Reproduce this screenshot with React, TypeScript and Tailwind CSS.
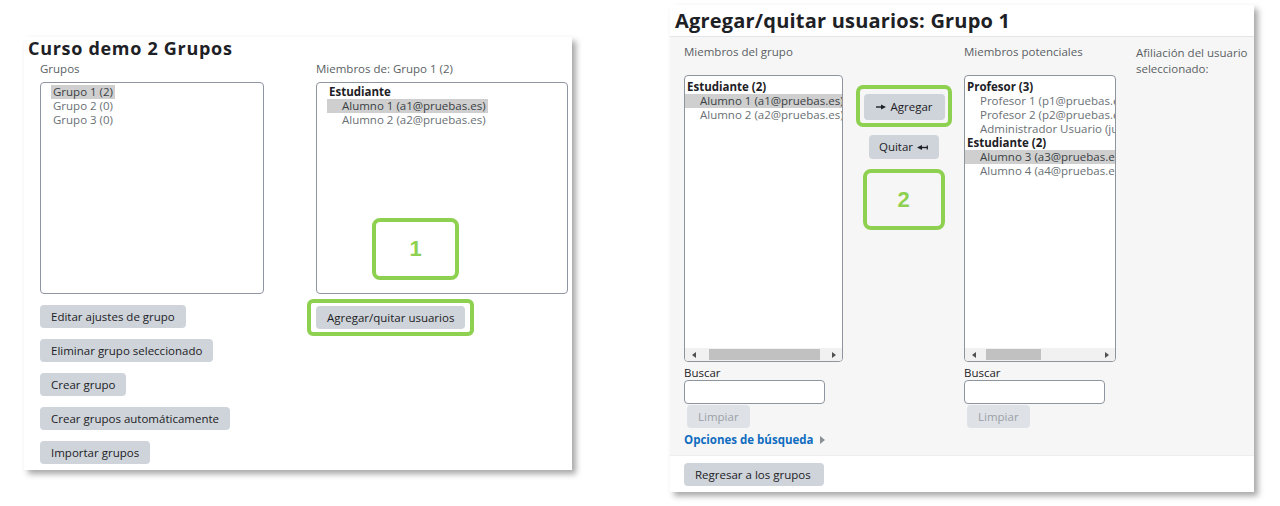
import type { ReactNode } from 'react'

function Btn({ children, className = '' }: { children: ReactNode; className?: string }) {
  return (
    <button
      className={`h-[23px] px-[11px] rounded-[4px] bg-[#ced4da] text-[11.5px] leading-none text-[#1d2125] flex items-center gap-[4px] whitespace-nowrap ${className}`}
    >
      {children}
    </button>
  )
}

function ArrowRight() {
  return (
    <svg width="10" height="6" viewBox="0 0 10 6" className="shrink-0">
      <path d="M0 3h6" stroke="#1d2125" strokeWidth="1.4" />
      <path d="M5 0.5L10 3L5 5.5z" fill="#1d2125" />
    </svg>
  )
}

function ArrowLeft() {
  return (
    <svg width="11" height="7" viewBox="0 0 11 7" className="shrink-0">
      <path d="M0 3.5L5 1V6z" fill="#1d2125" />
      <path d="M4 3.5h6.5" stroke="#1d2125" strokeWidth="1.4" />
      <path d="M10.3 1.5v4" stroke="#1d2125" strokeWidth="1.2" />
    </svg>
  )
}

function Scrollbar({ thumb }: { thumb: string }) {
  return (
    <div className="h-[13px] bg-[#f1f1f1] flex items-center shrink-0">
      <div className="w-[17px] flex justify-center">
        <div className="w-0 h-0 border-y-[3px] border-y-transparent border-r-[4px] border-r-[#505050]" />
      </div>
      <div className="flex-1 h-full flex items-center">
        <div className={`h-[11px] bg-[#c1c1c1] ${thumb}`} />
      </div>
      <div className="w-[17px] flex justify-center">
        <div className="w-0 h-0 border-y-[3px] border-y-transparent border-l-[4px] border-l-[#505050]" />
      </div>
    </div>
  )
}

function SearchBox() {
  return (
    <>
      <div className="mt-[4px] text-[11.5px] leading-[14px] text-[#1d2125]">Buscar</div>
      <div className="w-[141px] h-[24px] border border-[#8f959e] rounded-[4px] bg-white" />
      <Btn className="mt-[1px] ml-[3px] bg-[#dee2e6] text-[#9aa0a6]">Limpiar</Btn>
    </>
  )
}

export default function App() {
  return (
    <div className="w-[1280px] h-[506px] bg-white flex items-start font-['Open_Sans',sans-serif] overflow-hidden">
      {/* left screenshot */}
      <div className="ml-[24px] mt-[37px] w-[548px] h-[433px] bg-white shadow-[4px_4px_6px_rgba(0,0,0,0.35)] shrink-0">
        <h1 className="pl-[4px] pt-[1px] text-[18px] leading-[21px] tracking-[0.7px] font-bold text-[#1d2125]">Curso demo 2 Grupos</h1>
        <div className="flex pl-[16px] gap-[52px] mt-[3px]">
          <div className="w-[224px] flex flex-col items-start">
            <div className="text-[11.5px] leading-[14px] text-[#5a5f64]">Grupos</div>
            <div className="mt-[6px] w-full h-[212px] border border-[#8f959e] rounded-[4px] pl-[10px] pt-[2px] text-[11.5px] leading-[14px] text-[#6a7075]">
              <div className="px-[2px] bg-[#cfcfcf] text-[#3a3f44] w-fit">Grupo 1 (2)</div>
              <div className="px-[2px]">Grupo 2 (0)</div>
              <div className="px-[2px]">Grupo 3 (0)</div>
            </div>
            <div className="mt-[11px] flex flex-col items-start gap-[11px]">
              <Btn>Editar ajustes de grupo</Btn>
              <Btn>Eliminar grupo seleccionado</Btn>
              <Btn>Crear grupo</Btn>
              <Btn>Crear grupos automáticamente</Btn>
              <Btn>Importar grupos</Btn>
            </div>
          </div>
          <div className="w-[252px] flex flex-col items-start">
            <div className="text-[11.5px] leading-[14px] text-[#5a5f64]">Miembros de: Grupo 1 (2)</div>
            <div className="relative mt-[6px] w-full h-[212px] border border-[#8f959e] rounded-[4px] pl-[10px] pt-[2px] text-[11.5px] leading-[14px] text-[#6a7075]">
              <div className="px-[2px] font-bold text-[#1d2125]">Estudiante</div>
              <div className="pl-[15px] pr-[2px] bg-[#cfcfcf] text-[#3a3f44] w-fit">Alumno 1 (a1@pruebas.es)</div>
              <div className="pl-[15px] pr-[2px]">Alumno 2 (a2@pruebas.es)</div>
              <div className="absolute left-[55px] top-[135px] w-[87px] h-[62px] border-4 border-[#8ed04f] rounded-[8px] flex items-center justify-center text-[22px] font-bold text-[#8ed04f] font-['Liberation_Sans',sans-serif]">
                1
              </div>
            </div>
            <div className="relative mt-[12px]">
              <Btn className="h-[22px]">Agregar/quitar usuarios</Btn>
              <span className="absolute -left-[9px] -right-[9px] -top-[7px] -bottom-[7px] border-4 border-[#8ed04f] rounded-[6px]" />
            </div>
          </div>
        </div>
      </div>

      {/* right screenshot */}
      <div className="ml-[98px] mt-[5px] w-[584px] h-[487px] bg-white shadow-[4px_4px_6px_rgba(0,0,0,0.35)] shrink-0 flex flex-col">
        <h1 className="h-[32px] pl-[5px] pt-[4px] text-[20px] leading-[24px] tracking-[0.2px] font-bold text-[#1d2125] border-b border-[#e3e6e9]">
          Agregar/quitar usuarios: Grupo 1
        </h1>
        <div className="h-[418px] bg-[#f6f6f6] flex pl-[14px] pt-[8px]">
          <div className="w-[159px] flex flex-col items-start">
            <div className="text-[11.5px] leading-[14px] text-[#5a5f64]">Miembros del grupo</div>
            <div className="mt-[16px] w-full h-[287px] border border-[#8f959e] rounded-[4px] bg-white flex flex-col overflow-hidden">
              <div className="flex-1 pt-[4px] text-[11.5px] leading-[14px] whitespace-nowrap overflow-hidden text-[#6a7075]">
                <div className="pl-[2px] font-bold text-[#1d2125]">Estudiante (2)</div>
                <div className="pl-[15px] bg-[#cfcfcf] text-[#3a3f44]">Alumno 1 (a1@pruebas.es)</div>
                <div className="pl-[15px]">Alumno 2 (a2@pruebas.es)</div>
              </div>
              <Scrollbar thumb="ml-[7px] w-[111px]" />
            </div>
            <SearchBox />
            <div className="mt-[5px] flex items-center gap-[6px] text-[11.5px] leading-[14px] font-bold text-[#0f6cbf]">
              Opciones de búsqueda
              <div className="w-0 h-0 border-y-[4px] border-y-transparent border-l-[5px] border-l-[#8a8f94]" />
            </div>
          </div>

          <div className="w-[121px] flex flex-col items-center pt-[49px]">
            <div className="relative ml-[2px]">
              <Btn className="h-[26px] w-[81px] justify-center">
                <ArrowRight />
                Agregar
              </Btn>
              <span className="absolute -left-[8px] -right-[7px] -top-[9px] -bottom-[7px] border-4 border-[#8ed04f] rounded-[7px]" />
            </div>
            <Btn className="mt-[15px] h-[24px] w-[70px] justify-center">
              Quitar
              <ArrowLeft />
            </Btn>
            <div className="mt-[10px] w-[82px] h-[61px] border-4 border-[#8ed04f] rounded-[8px] flex items-center justify-center text-[22px] font-bold text-[#8ed04f] font-['Liberation_Sans',sans-serif]">
              2
            </div>
          </div>

          <div className="w-[152px] flex flex-col items-start">
            <div className="text-[11.5px] leading-[14px] text-[#5a5f64]">Miembros potenciales</div>
            <div className="mt-[16px] w-full h-[287px] border border-[#8f959e] rounded-[4px] bg-white flex flex-col overflow-hidden">
              <div className="flex-1 pt-[4px] text-[11.5px] leading-[14px] whitespace-nowrap overflow-hidden text-[#6a7075]">
                <div className="pl-[2px] font-bold text-[#1d2125]">Profesor (3)</div>
                <div className="pl-[15px]">Profesor 1 (p1@pruebas.es)</div>
                <div className="pl-[15px]">Profesor 2 (p2@pruebas.es)</div>
                <div className="pl-[15px]">Administrador Usuario (juan@pruebas.es)</div>
                <div className="pl-[2px] font-bold text-[#1d2125]">Estudiante (2)</div>
                <div className="pl-[15px] bg-[#cfcfcf] text-[#3a3f44]">Alumno 3 (a3@pruebas.es)</div>
                <div className="pl-[15px]">Alumno 4 (a4@pruebas.es)</div>
              </div>
              <Scrollbar thumb="ml-[4px] w-[55px]" />
            </div>
            <SearchBox />
          </div>

          <div className="ml-[20px] w-[116px] text-[11.5px] leading-[16px] text-[#5a5f64]">
            Afiliación del usuario seleccionado:
          </div>
        </div>
        <div className="flex-1 border-t border-[#eceef0] pl-[14px] pt-[7px]">
          <Btn className="w-[140px]">Regresar a los grupos</Btn>
        </div>
      </div>
    </div>
  )
}
